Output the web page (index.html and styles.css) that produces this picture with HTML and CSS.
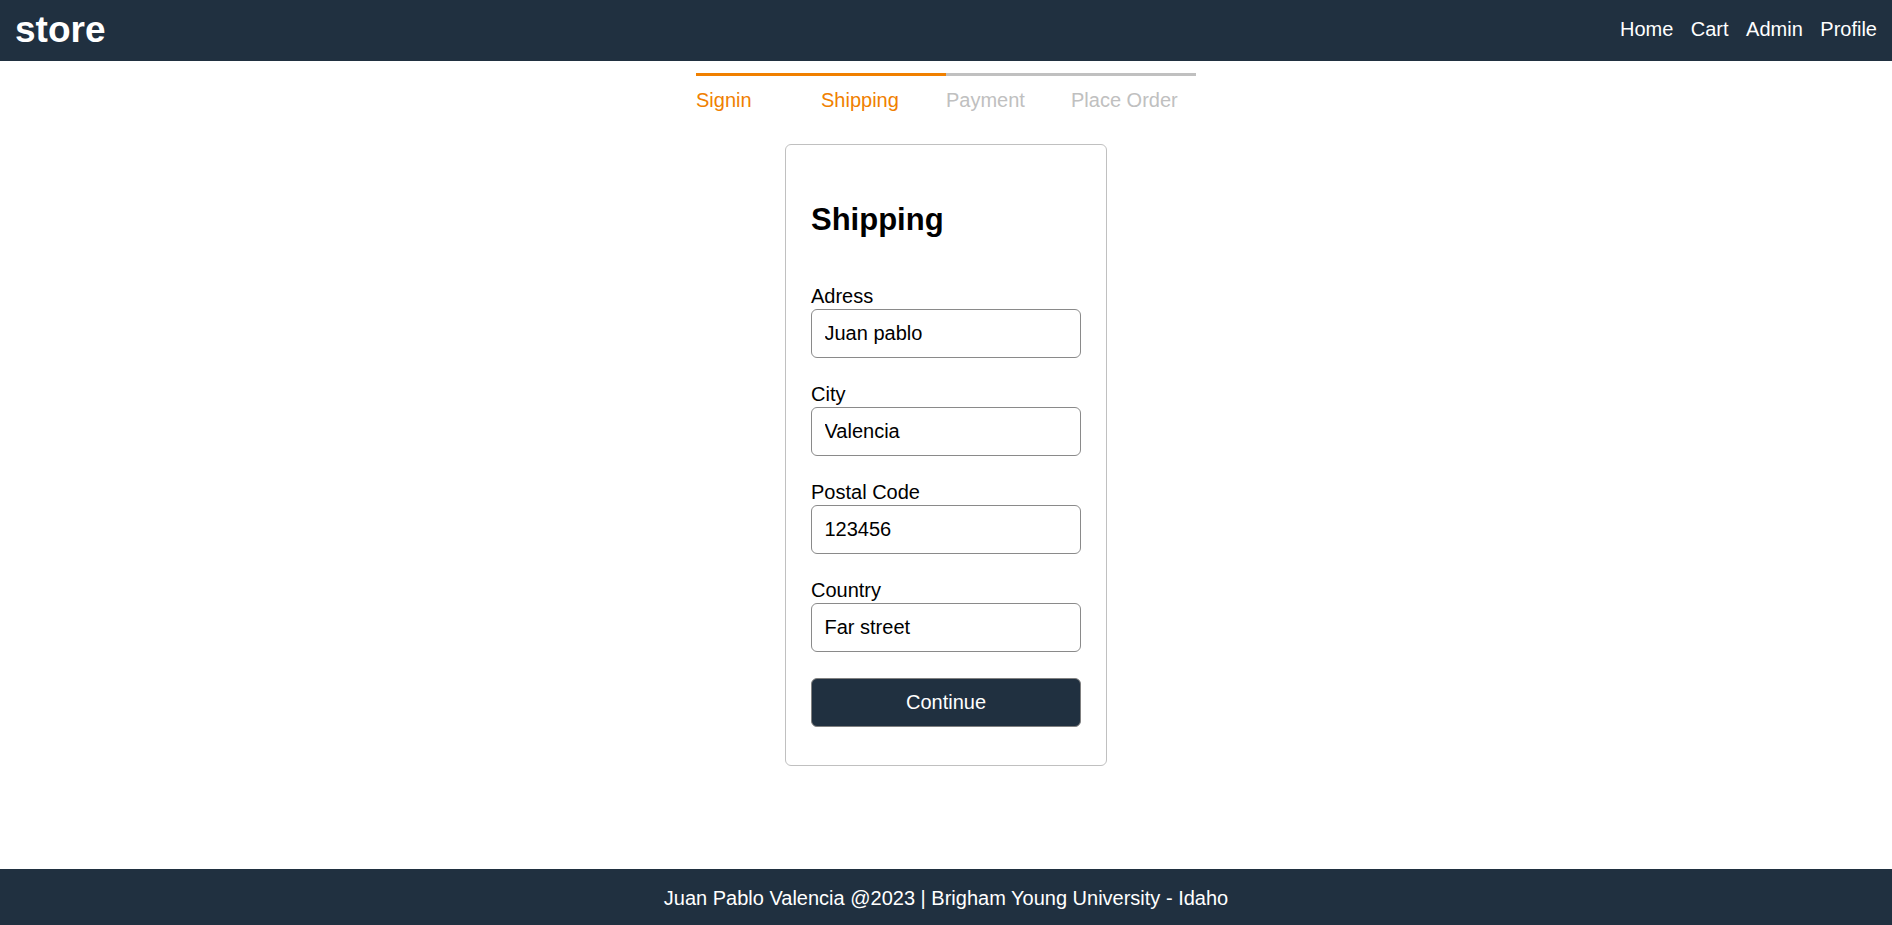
FILE: index.html
```html
<!DOCTYPE html>
<html lang="en">
<head>
<meta charset="utf-8">
<title>store</title>
<link rel="stylesheet" href="styles.css">
</head>
<body>
<div class="page">
  <header class="topbar">
    <a class="brand" href="#">store</a>
    <nav class="nav">
      <a href="#">Home</a>
      <a href="#">Cart</a>
      <a href="#">Admin</a>
      <a href="#">Profile</a>
    </nav>
  </header>
  <main class="main">
    <div class="steps">
      <div class="step active">Signin</div>
      <div class="step active">Shipping</div>
      <div class="step">Payment</div>
      <div class="step">Place Order</div>
    </div>
    <form class="card">
      <h1 class="title">Shipping</h1>
      <div class="field">
        <label class="label" for="address">Adress</label>
        <input class="input" id="address" type="text" value="Juan pablo">
      </div>
      <div class="field">
        <label class="label" for="city">City</label>
        <input class="input" id="city" type="text" value="Valencia">
      </div>
      <div class="field">
        <label class="label" for="postal">Postal Code</label>
        <input class="input" id="postal" type="text" value="123456">
      </div>
      <div class="field">
        <label class="label" for="country">Country</label>
        <input class="input" id="country" type="text" value="Far street">
      </div>
      <button class="button" type="button">Continue</button>
    </form>
  </main>
  <footer class="footer">Juan Pablo Valencia @2023 | Brigham Young University - Idaho</footer>
</div>
</body>
</html>
```

FILE: styles.css
```css
* {
  box-sizing: border-box;
}

html, body {
  margin: 0;
  padding: 0;
}

body {
  font-family: "Liberation Sans", Arial, Helvetica, sans-serif;
  font-size: 20px;
  color: #000;
  background: #fff;
}

.page {
  min-height: 100vh;
  display: flex;
  flex-direction: column;
}

.topbar {
  height: 61px;
  background: #203040;
  display: flex;
  align-items: center;
  justify-content: space-between;
  padding: 0 15px 0 15px;
}

.brand {
  color: #fff;
  text-decoration: none;
  font-weight: bold;
  font-size: 37px;
  margin-bottom: 2px;
}

.nav {
  display: flex;
  gap: 17.5px;
  margin-bottom: 3px;
}

.nav a {
  color: #fff;
  text-decoration: none;
  font-size: 20px;
}

.main {
  flex: 1;
  display: flex;
  flex-direction: column;
  align-items: center;
}

.steps {
  display: flex;
  width: 500px;
  margin-top: 12px;
}

.step {
  flex: 1;
  border-top: 3px solid #c0c0c0;
  color: #c0c0c0;
  padding-top: 12.5px;
  line-height: 23px;
}

.step.active {
  border-top-color: #f08000;
  color: #f08000;
}

.card {
  margin-top: 32px;
  width: 322px;
  border: 1px solid #c0c0c0;
  border-radius: 6px;
  padding: 57px 25px 38px;
  display: flex;
  flex-direction: column;
}

.title {
  margin: 0 0 48px;
  font-size: 31px;
  font-weight: bold;
  line-height: 35px;
}

.field {
  display: flex;
  flex-direction: column;
  margin-bottom: 24.5px;
}

.label {
  line-height: 23px;
  margin-bottom: 1.5px;
}

.input {
  height: 49px;
  border: 1px solid #8a8a8a;
  border-radius: 6px;
  padding: 0 12.5px;
  font-family: inherit;
  font-size: 20px;
  color: #000;
  background: #fff;
}

.button {
  margin-top: 1.5px;
  height: 49px;
  background: #203040;
  color: #fff;
  border: 1px solid #808080;
  border-radius: 6px;
  font-family: inherit;
  font-size: 20px;
}

.footer {
  height: 56px;
  background: #203040;
  color: #fff;
  display: flex;
  align-items: center;
  justify-content: center;
  font-size: 20px;
  padding-top: 3px;
}
```
